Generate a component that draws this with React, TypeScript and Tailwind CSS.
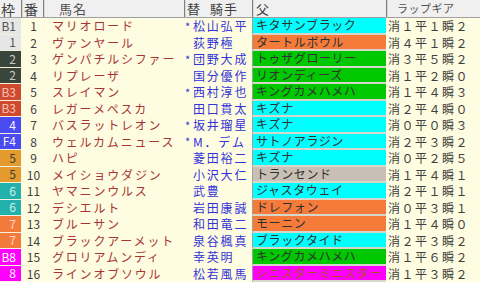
const font = {
  fontFamily: '"Noto Sans CJK JP", "Noto Sans", sans-serif',
};

type Row = {
  waku: string;
  wakuBg: string;
  wakuText: string;
  num: number;
  name: string;
  mark: boolean;
  jockey: string;
  sire: string;
  sireBg: string;
  lap: [number, number, number];
};

const rows: Row[] = [
  { waku: 'B1', wakuBg: 'bg-[#e6e6e6]', wakuText: 'text-[#555555]', num: 1, name: 'マリオロード', mark: true, jockey: '松山弘平', sire: 'キタサンブラック', sireBg: 'bg-[#00ffff]', lap: [1, 1, 2] },
  { waku: '1', wakuBg: 'bg-[#e6e6e6]', wakuText: 'text-[#555555]', num: 2, name: 'ヴァンヤール', mark: false, jockey: '荻野極', sire: 'タートルボウル', sireBg: 'bg-[#f57b3b]', lap: [4, 1, 2] },
  { waku: '2', wakuBg: 'bg-[#3b463b]', wakuText: 'text-[#c8c8c8]', num: 3, name: 'ゲンパチルシファー', mark: true, jockey: '団野大成', sire: 'トゥザグローリー', sireBg: 'bg-[#00c800]', lap: [3, 5, 2] },
  { waku: '2', wakuBg: 'bg-[#3b463b]', wakuText: 'text-[#c8c8c8]', num: 4, name: 'リプレーザ', mark: false, jockey: '国分優作', sire: 'リオンディーズ', sireBg: 'bg-[#00c800]', lap: [1, 2, 0] },
  { waku: 'B3', wakuBg: 'bg-[#d04a30]', wakuText: 'text-[#f3c4b6]', num: 5, name: 'スレイマン', mark: true, jockey: '西村淳也', sire: 'キングカメハメハ', sireBg: 'bg-[#00c800]', lap: [1, 4, 3] },
  { waku: 'B3', wakuBg: 'bg-[#d04a30]', wakuText: 'text-[#f3c4b6]', num: 6, name: 'レガーメペスカ', mark: false, jockey: '田口貫太', sire: 'キズナ', sireBg: 'bg-[#00ffff]', lap: [2, 4, 0] },
  { waku: '4', wakuBg: 'bg-[#4a4af2]', wakuText: 'text-[#f0f0ff]', num: 7, name: 'バスラットレオン', mark: true, jockey: '坂井瑠星', sire: 'キズナ', sireBg: 'bg-[#00ffff]', lap: [0, 0, 3] },
  { waku: 'F4', wakuBg: 'bg-[#4a4af2]', wakuText: 'text-[#f0f0ff]', num: 8, name: 'ウェルカムニュース', mark: true, jockey: 'M．デム', sire: 'サトノアラジン', sireBg: 'bg-[#00ffff]', lap: [2, 3, 2] },
  { waku: '5', wakuBg: 'bg-[#e39a2e]', wakuText: 'text-[#3a3a3a]', num: 9, name: 'ハピ', mark: false, jockey: '菱田裕二', sire: 'キズナ', sireBg: 'bg-[#00ffff]', lap: [0, 2, 5] },
  { waku: '5', wakuBg: 'bg-[#e39a2e]', wakuText: 'text-[#3a3a3a]', num: 10, name: 'メイショウダジン', mark: false, jockey: '小沢大仁', sire: 'トランセンド', sireBg: 'bg-[#c8bfb5]', lap: [1, 4, 1] },
  { waku: '6', wakuBg: 'bg-[#23b1ab]', wakuText: 'text-[#d8f0ee]', num: 11, name: 'ヤマニンウルス', mark: false, jockey: '武豊', sire: 'ジャスタウェイ', sireBg: 'bg-[#00ffff]', lap: [2, 1, 1] },
  { waku: '6', wakuBg: 'bg-[#23b1ab]', wakuText: 'text-[#d8f0ee]', num: 12, name: 'デシエルト', mark: false, jockey: '岩田康誠', sire: 'ドレフォン', sireBg: 'bg-[#f57b3b]', lap: [0, 3, 1] },
  { waku: '7', wakuBg: 'bg-[#f27a3a]', wakuText: 'text-[#fbd8c8]', num: 13, name: 'ブルーサン', mark: false, jockey: '和田竜二', sire: 'モーニン', sireBg: 'bg-[#f57b3b]', lap: [1, 4, 0] },
  { waku: '7', wakuBg: 'bg-[#f27a3a]', wakuText: 'text-[#fbd8c8]', num: 14, name: 'ブラックアーメット', mark: false, jockey: '泉谷楓真', sire: 'ブラックタイド', sireBg: 'bg-[#00ffff]', lap: [2, 3, 2] },
  { waku: 'B8', wakuBg: 'bg-[#ff00ff]', wakuText: 'text-[#ffffff]', num: 15, name: 'グロリアムンディ', mark: false, jockey: '幸英明', sire: 'キングカメハメハ', sireBg: 'bg-[#00c800]', lap: [1, 6, 2] },
  { waku: '8', wakuBg: 'bg-[#ff00ff]', wakuText: 'text-[#ffffff]', num: 16, name: 'ラインオブソウル', mark: false, jockey: '松若風馬', sire: 'シニスターミニスター', sireBg: 'bg-[#ff00ff]', lap: [1, 3, 2] },
];

// full-width digits for the lap gear column
const wide = (n: number) => String.fromCharCode(0xff10 + n);

function Divider() {
  return <div className="h-full w-[2px] shrink-0 border-l border-[#808080] bg-[#d8d8d8]" />;
}

export default function App() {
  return (
    <div className="h-[282px] w-[480px] overflow-hidden bg-[#fffde1] text-[12px] leading-none" style={font}>
      <div className="flex h-[18px] items-center border-b border-[#a0a0a0] bg-[#f0f0f0] text-[#404040]">
        <div className="flex h-full w-[21px] items-center pl-[1px] text-[14px]">枠</div>
        <Divider />
        <div className="flex h-full w-[20px] items-center pl-[1px] text-[14px]">番</div>
        <Divider />
        <div className="flex h-full w-[139px] items-center pl-[14px] text-[13px] tracking-[1px] text-[#505050]">馬名</div>
        <Divider />
        <div className="flex h-full w-[66px] items-center pl-[1px] text-[13px] tracking-[1px]">
          替<span className="ml-[9px]">騎手</span>
        </div>
        <Divider />
        <div className="flex h-full w-[132px] items-center pl-[2px] text-[13px]">父</div>
        <Divider />
        <div className="flex h-full flex-1 items-center pl-[9px] text-[11px] tracking-[0.5px] text-[#505050]">ラップギア</div>
      </div>

      {rows.map((row) => (
        <div key={row.num} className="flex h-[16.5px] items-stretch">
          <div className={`flex w-[21px] shrink-0 items-center justify-end border-b border-[#f4f0dc] pr-[5px] text-[12px] ${row.wakuBg} ${row.wakuText}`}>
            {row.waku}
          </div>
          <div className="flex w-[22px] shrink-0 items-center justify-center pl-[3px] text-[12px] text-[#404040]">
            {row.num}
          </div>
          <div className="flex w-[141px] shrink-0 items-center whitespace-nowrap pl-[9px] tracking-[1.8px] text-[#a83434]">
            {row.name}
          </div>
          <div className="flex w-[68px] shrink-0 items-center whitespace-nowrap pl-[1px] text-[#3434d8]">
            <span className="w-[8px] text-[11px]">{row.mark ? '*' : ''}</span>
            <span className="tracking-[1.8px]">{row.jockey}</span>
          </div>
          <div className={`flex w-[134px] shrink-0 items-center whitespace-nowrap border-b-2 border-l border-b-[#d6d6cc] border-l-[#a0a0a0] pl-[3px] tracking-[0.6px] ${row.sireBg} ${row.sire === 'シニスターミニスター' ? 'text-[#a8502a]' : 'text-[#303030]'}`}>
            {row.sire}
          </div>
          <div className="flex flex-1 items-center whitespace-nowrap pl-[2px] tracking-[1.5px] text-[#404040]">
            消{wide(row.lap[0])}平{wide(row.lap[1])}瞬{wide(row.lap[2])}
          </div>
        </div>
      ))}
    </div>
  );
}
